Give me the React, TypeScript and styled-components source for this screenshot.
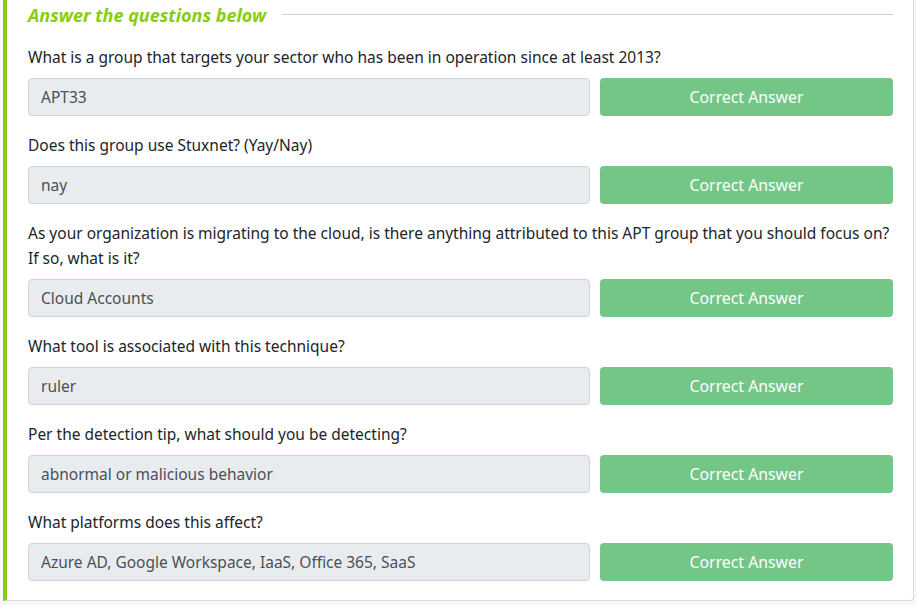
import React from "react";
import styled, { createGlobalStyle } from "styled-components";

const Global = createGlobalStyle`
  html, body { margin: 0; padding: 0; background: #f7f7f7; }
  body { font-family: "Noto Sans", "Open Sans", sans-serif; }
  * { box-sizing: border-box; }
`;

const Page = styled.div`
  width: 916px;
  height: 605px;
  overflow: hidden;
  padding-left: 3px;
  padding-right: 2px;
`;

const Card = styled.section`
  margin-top: -25px;
  background: #ffffff;
  border: 1px solid #dcdcdc;
  border-left: 4px solid #88cc14;
  border-radius: 0 0 4px 0;
  padding: 24px 20px 19px 21px;
`;

const HeadingRow = styled.div`
  display: flex;
  align-items: center;
  gap: 16px;
  height: 22px;
  margin-top: 4px;
  margin-bottom: 19px;
`;

const Heading = styled.h2`
  margin: 0;
  font-size: 18px;
  font-weight: 700;
  font-style: italic;
  color: #88cc14;
  white-space: nowrap;
  line-height: 22px;
`;

const Rule = styled.div`
  flex: 1;
  height: 1px;
  background: #cfcfcf;
  margin-top: -2px;
`;

const Question = styled.div`
  display: flex;
  flex-direction: column;
  gap: 8px;
  margin-bottom: 17px;
  &:last-child { margin-bottom: 0; }
`;

const Label = styled.p`
  margin: 0;
  font-size: 15.5px;
  line-height: 25px;
  color: #212529;
`;

const AnswerRow = styled.div`
  display: grid;
  grid-template-columns: 562px 1fr;
  gap: 10px;
`;

const Answer = styled.div`
  height: 38px;
  display: flex;
  align-items: center;
  padding: 0 12px;
  background: #e9ecef;
  border: 1px solid #ced4da;
  border-radius: 4px;
  font-size: 15.5px;
  color: #495057;
`;

const Button = styled.button`
  height: 38px;
  border: none;
  border-radius: 4px;
  background: #74c686;
  color: #ffffff;
  font-family: inherit;
  font-size: 15.8px;
  padding: 0;
`;

const items = [
  { q: "What is a group that targets your sector who has been in operation since at least 2013?", a: "APT33" },
  { q: "Does this group use Stuxnet? (Yay/Nay)", a: "nay" },
  { q: "As your organization is migrating to the cloud, is there anything attributed to this APT group that you should focus on? If so, what is it?", a: "Cloud Accounts" },
  { q: "What tool is associated with this technique?", a: "ruler" },
  { q: "Per the detection tip, what should you be detecting?", a: "abnormal or malicious behavior" },
  { q: "What platforms does this affect?", a: "Azure AD, Google Workspace, IaaS, Office 365, SaaS" },
];

export default function App() {
  return (
    <Page>
      <Global />
      <Card>
        <HeadingRow>
          <Heading>Answer the questions below</Heading>
          <Rule />
        </HeadingRow>
        {items.map((it, i) => (
          <Question key={i}>
            <Label>{it.q}</Label>
            <AnswerRow>
              <Answer>{it.a}</Answer>
              <Button>Correct Answer</Button>
            </AnswerRow>
          </Question>
        ))}
      </Card>
    </Page>
  );
}
